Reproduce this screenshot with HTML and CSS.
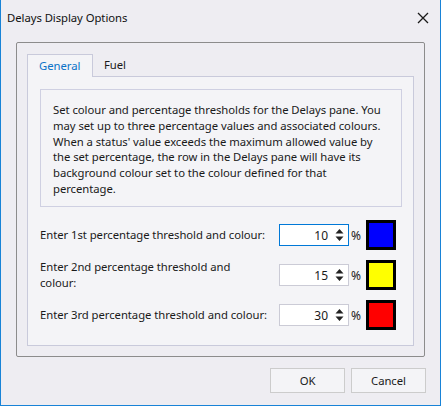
FILE: index.html
```html
<!DOCTYPE html>
<html>
<head>
<meta charset="utf-8">
<link rel="stylesheet" href="styles.css">
</head>
<body>
<div class="window">
  <div class="titlebar">
    <span class="title">Delays Display Options</span>
    <svg class="close" width="12" height="12" viewBox="0 0 12 12"><path d="M1 1 L11 11 M11 1 L1 11" stroke="#1a1a1a" stroke-width="1.3" fill="none"/></svg>
  </div>
  <div class="group">
    <div class="tabs">
      <div class="tab active">General</div>
      <div class="tab">Fuel</div>
    </div>
    <div class="panel">
      <div class="desc">Set colour and percentage thresholds for the Delays pane. You<br>may set up to three percentage values and associated colours.<br>When a status' value exceeds the maximum allowed value by<br>the set percentage, the row in the Delays pane will have its<br>background colour set to the colour defined for that<br>percentage.</div>
      <div class="rows">
        <div class="row">
          <div class="label">Enter 1st percentage threshold and colour:</div>
          <div class="spin focused"><span class="val">10</span><span class="arrows"><svg width="9" height="14" viewBox="0 0 9 14"><path d="M4.5 1 L8.5 5.5 L0.5 5.5 Z M4.5 13 L8.5 8.5 L0.5 8.5 Z" fill="#222"/></svg></span></div>
          <div class="pct">%</div>
          <div class="swatch blue"></div>
        </div>
        <div class="row">
          <div class="label">Enter 2nd percentage threshold and<br>colour:</div>
          <div class="spin"><span class="val">15</span><span class="arrows"><svg width="9" height="14" viewBox="0 0 9 14"><path d="M4.5 1 L8.5 5.5 L0.5 5.5 Z M4.5 13 L8.5 8.5 L0.5 8.5 Z" fill="#222"/></svg></span></div>
          <div class="pct">%</div>
          <div class="swatch yellow"></div>
        </div>
        <div class="row">
          <div class="label">Enter 3rd percentage threshold and colour:</div>
          <div class="spin"><span class="val">30</span><span class="arrows"><svg width="9" height="14" viewBox="0 0 9 14"><path d="M4.5 1 L8.5 5.5 L0.5 5.5 Z M4.5 13 L8.5 8.5 L0.5 8.5 Z" fill="#222"/></svg></span></div>
          <div class="pct">%</div>
          <div class="swatch red"></div>
        </div>
      </div>
    </div>
  </div>
  <div class="buttons">
    <div class="btn">OK</div>
    <div class="btn">Cancel</div>
  </div>
</div>
</body>
</html>
```
FILE: styles.css
```css
* { box-sizing: border-box; }
html, body { margin: 0; padding: 0; }
body {
  width: 441px;
  height: 406px;
  font-family: "Noto Sans", "Open Sans", sans-serif;
  font-size: 11.3px;
  letter-spacing: -0.05px;
  color: #1a1a1a;
  background: #eeedf2;
}
.window {
  width: 441px;
  height: 406px;
  background: #eeedf2;
  border-left: 1px solid #1883d7;
  border-right: 1px solid #1883d7;
  border-bottom: 1px solid #1883d7;
  display: flex;
  flex-direction: column;
}
.titlebar {
  height: 42px;
  display: flex;
  align-items: flex-start;
  justify-content: space-between;
  padding: 10px 11px 0 6px;
}
.title {
  line-height: 16px;
  color: #111;
}
.close { margin-top: 2px; }
.group {
  margin-left: 15px;
  width: 409px;
  height: 315px;
  border: 1px solid #8c8c8c;
  border-radius: 2px;
  padding: 11px 10px 10px 10px;
  display: flex;
  flex-direction: column;
}
.tabs {
  display: flex;
  height: 22px;
  position: relative;
  z-index: 1;
}
.tab {
  height: 22px;
  line-height: 21px;
  padding: 0 11px;
  color: #1a1a1a;
}
.tab.active {
  width: 66px;
  color: #0a72c8;
  background: #f4f4f7;
  border: 1px solid #c9cadb;
  border-bottom: none;
  height: 23px;
}
.tab + .tab { padding-left: 11px; }
.panel {
  flex: 1;
  background: #f4f4f7;
  border: 1px solid #c9cadb;
  padding: 12px 11px 0 12px;
}
.desc {
  height: 118px;
  border: 1px solid #cfd0e2;
  padding: 12px 4px 0 12px;
  line-height: 15.8px;
  white-space: nowrap;
}
.rows {
  margin-top: 13px;
  display: flex;
  flex-direction: column;
  gap: 10px;
}
.row {
  height: 30px;
  display: flex;
  align-items: center;
}
.label {
  width: 239px;
  line-height: 16px;
  white-space: nowrap;
}
.spin {
  width: 70px;
  height: 22px;
  background: #fff;
  border: 1px solid #cbcbd6;
  display: flex;
  align-items: center;
  justify-content: flex-end;
  padding-right: 4px;
}
.spin.focused { border-color: #0078d7; }
.val { margin-right: 7px; font-size: 12px; }
.arrows { display: flex; align-items: center; }
.pct {
  width: 17px;
  padding-left: 2px;
  font-size: 12px;
}
.swatch {
  width: 30px;
  height: 30px;
  border: 3px solid #000;
}
.blue { background: #0000ff; }
.yellow { background: #ffff00; }
.red { background: #ff0000; }
.buttons {
  display: flex;
  justify-content: flex-end;
  gap: 6px;
  margin-top: 11px;
  padding-right: 14px;
}
.btn {
  width: 75px;
  height: 25px;
  border: 1px solid #cccccc;
  background: #f4f4f7;
  display: flex;
  align-items: center;
  justify-content: center;
}
```
